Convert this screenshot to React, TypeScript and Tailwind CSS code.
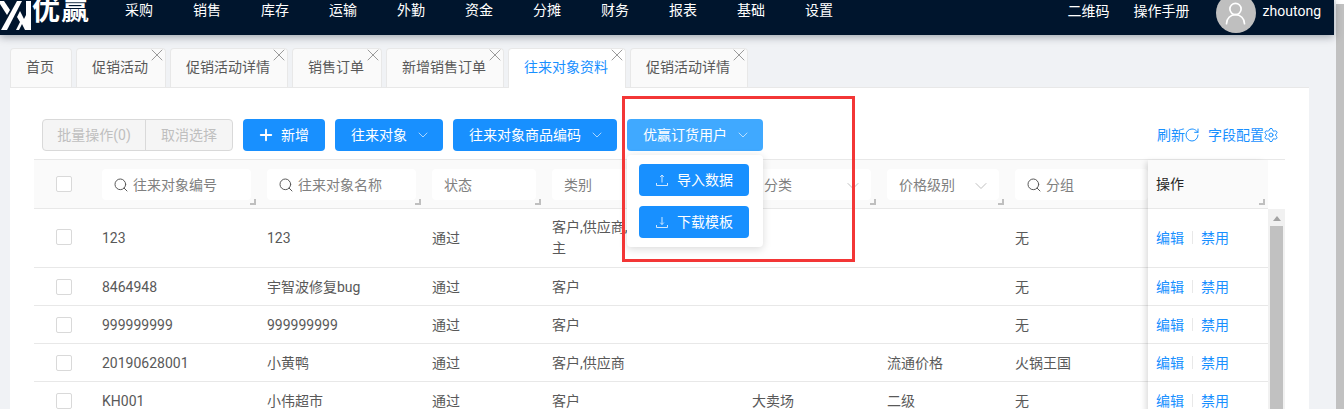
import { ChevronDown, Plus, RotateCw, Search, Settings, UserRound, X } from "lucide-react"

const navItems = ["采购", "销售", "库存", "运输", "外勤", "资金", "分摊", "财务", "报表", "基础", "设置"]

const tabs = [
  { label: "首页" },
  { label: "促销活动", close: true },
  { label: "促销活动详情", close: true },
  { label: "销售订单", close: true },
  { label: "新增销售订单", close: true },
  { label: "往来对象资料", close: true, active: true },
  { label: "促销活动详情", close: true },
]

const filters = [
  { label: "往来对象编号", width: "w-[165px]", search: true },
  { label: "往来对象名称", width: "w-[165px]", search: true },
  { label: "状态", width: "w-[120px]" },
  { label: "类别", width: "w-[200px]" },
  { label: "分类", width: "w-[135px]", chevron: true },
  { label: "价格级别", width: "w-[128px]", chevron: true },
  { label: "分组", width: "w-[133px]", search: true, open: true },
]

const rows = [
  { h: "h-[59px] pb-[2px]", cells: ["123", "123", "通过", "客户,供应商,加工商,物流商,货主", "", "", "无"] },
  { h: "h-[38px]", cells: ["8464948", "宇智波修复bug", "通过", "客户", "", "", "无"] },
  { h: "h-[38px]", cells: ["999999999", "999999999", "通过", "客户", "", "", "无"] },
  { h: "h-[38px]", cells: ["20190628001", "小黄鸭", "通过", "客户,供应商", "", "流通价格", "火锅王国"] },
  { h: "h-[38px]", cells: ["KH001", "小伟超市", "通过", "客户", "大卖场", "二级", "无"] },
]

const cellWidths = ["w-[165px]", "w-[165px]", "w-[120px]", "w-[200px]", "w-[135px]", "w-[128px]", "w-[133px]"]

function Checkbox() {
  return <span className="block h-4 w-4 rounded-[2px] border border-[#d9d9d9] bg-white" />
}

function ResizeHandle() {
  return <span className="absolute right-[-5px] bottom-[-5px] h-[6px] w-[6px] border-r-2 border-b-2 border-[#bfbfbf]" />
}

function TrayIcon({ down }: { down?: boolean }) {
  return (
    <svg width="14" height="14" viewBox="0 0 14 14" fill="none" stroke="currentColor" strokeWidth="1" className="shrink-0 opacity-80">
      <path d="M1.500 10v2.500h11V10" />
      {down ? <path d="M7 2v7.500M5.200 7.600 7 9.500l1.800-1.900" /> : <path d="M7 9.500V2M5.200 3.900 7 2l1.800 1.900" />}
    </svg>
  )
}

function BtnChevron() {
  return <ChevronDown size={16} strokeWidth={1.2} className="-mx-[2px] shrink-0 opacity-80" />
}

function Logo() {
  return (
    <div className="flex h-[35px] w-[125px] shrink-0 items-start overflow-hidden">
      <svg width="32" height="32" viewBox="0 0 32 32" fill="white" className="shrink-0">
        <path d="M-2 1h6l6 9-3 5z" />
        <path d="M1 30 17 1h5L7 30z" />
        <path d="M16 30l4-8-3-5 3-6 4 8 2-4V1h5v29h-6l-3-6-3 6z" />
      </svg>
      <span className="-mt-[5px] text-[28px] leading-[32px] font-bold tracking-[1px] text-white">优赢</span>
    </div>
  )
}

function Header() {
  return (
    <header className="relative z-10 flex h-[35px] w-[1334px] items-start overflow-hidden bg-[#00152d] text-sm text-white shadow-[0_2px_8px_rgba(0,21,41,0.35)]">
      <Logo />
      <nav className="flex gap-10 leading-[20px]">
        {navItems.map((item) => (
          <span key={item}>{item}</span>
        ))}
      </nav>
      <div className="ml-auto flex gap-6 leading-[22px]">
        <span>二维码</span>
        <span>操作手册</span>
      </div>
      <span className="mt-[-7px] ml-[26px] flex h-10 w-10 items-center justify-center rounded-full bg-[#bfbfbf]">
        <UserRound size={27} strokeWidth={1.5} />
      </span>
      <span className="ml-[7px] pr-[13px] leading-[22px]">zhoutong</span>
    </header>
  )
}

function Tabs() {
  return (
    <div className="mt-[13px] flex gap-1 pl-[10px]">
      {tabs.map((tab, i) => (
        <div
          key={i}
          className={
            tab.active
              ? "relative -mb-px h-10 rounded-t-[4px] border border-b-0 border-[#e8e8e8] bg-white pr-[17px] pl-[15px] text-sm leading-[37px] text-[#1890ff]"
              : "relative h-[39px] rounded-t-[4px] border border-b-0 border-[#e8e8e8] bg-[#fafafa] pr-[17px] pl-[15px] text-sm leading-[37px] text-[#595959]"
          }
        >
          {tab.label}
          {tab.close && <X size={20} strokeWidth={1.2} className="absolute top-[-4px] right-[-2px] text-[#9a9a9a]" />}
        </div>
      ))}
    </div>
  )
}

function Toolbar() {
  const base = "flex h-8 shrink-0 items-center whitespace-nowrap rounded-[4px] px-4 text-sm text-white"
  const btn = `${base} bg-[#1890ff]`
  return (
    <div className="flex items-center pl-2">
      <div className="flex h-8 w-[191px] rounded-[4px] border border-[#d9d9d9] bg-[#f5f5f5] text-sm leading-[30px] text-[#bfbfbf]">
        <span className="w-[103px] border-r border-[#d9d9d9] text-center">批量操作(0)</span>
        <span className="flex-1 text-center">取消选择</span>
      </div>
      <button className={`${btn} ml-[10px] w-[82px] gap-[6px] pl-[14px]`}>
        <Plus size={18} strokeWidth={2.5} className="shrink-0" />
        新增
      </button>
      <button className={`${btn} ml-[10px] w-[108px] gap-[10px]`}>
        往来对象
        <BtnChevron />
      </button>
      <button className={`${btn} ml-[10px] w-[164px] gap-[10px]`}>
        往来对象商品编码
        <BtnChevron />
      </button>
      <div className="relative ml-[10px]">
        <button className={`${base} w-[136px] gap-[10px] bg-[#40a9ff]`}>
          优赢订货用户
          <BtnChevron />
        </button>
        <div className="absolute top-9 left-0 z-20 flex h-[92px] w-[136px] flex-col gap-[10px] rounded-[4px] bg-white px-3 pt-[9px] shadow-[0_2px_8px_rgba(0,0,0,0.15)]">
          <button className={`${btn} w-[110px] gap-2 pl-4`}>
            <TrayIcon />
            导入数据
          </button>
          <button className={`${btn} w-[110px] gap-2 pl-4`}>
            <TrayIcon down />
            下载模板
          </button>
        </div>
      </div>
      <div className="ml-auto flex items-center gap-[9px] pr-[7px] text-sm text-[#1890ff]">
        <span className="flex items-center">
          刷新
          <RotateCw size={16} strokeWidth={1.5} className="-mx-px" />
        </span>
        <span className="flex items-center">
          字段配置
          <Settings size={16} strokeWidth={1.5} className="-mx-px" />
        </span>
      </div>
    </div>
  )
}

function Table() {
  return (
    <div className="mt-2 flex border-t border-[#e8e8e8] text-sm leading-[21px] text-[#595959]">
      <div className="w-[1114px] shrink-0 overflow-hidden">
        <div className="flex h-[49px] border-b border-[#e8e8e8] bg-[#fafafa]">
          <div className="w-[68px] shrink-0 pt-4 pl-[22px]">
            <Checkbox />
          </div>
          {filters.map((f) => (
            <div key={f.label} className={`${f.width} shrink-0 pt-[9px] ${f.open ? "" : "pr-4"}`}>
              <div className="relative flex h-[31px] items-center rounded-[4px] bg-white pt-[2px] pl-3 text-[#808080]">
                {f.search && <Search size={16} strokeWidth={1.5} className="mr-1 -ml-px shrink-0 -translate-y-px text-[#595959]" />}
                {f.label}
                {f.chevron && <ChevronDown size={20} strokeWidth={1.2} className="absolute right-2 text-[#bfbfbf]" />}
                {!f.open && <ResizeHandle />}
              </div>
            </div>
          ))}
        </div>
        {rows.map((row, i) => (
          <div key={i} className={`${row.h} flex items-center border-b border-[#e8e8e8]`}>
            <div className="w-[68px] shrink-0 pl-[22px]">
              <Checkbox />
            </div>
            {row.cells.map((cell, j) => (
              <div key={j} className={`${cellWidths[j]} shrink-0 pt-[2px] pr-4`}>
                {cell}
              </div>
            ))}
          </div>
        ))}
      </div>
      <div className="z-10 w-[120px] shrink-0 bg-white shadow-[-4px_0_6px_-2px_rgba(0,0,0,0.15)]">
        <div className="relative flex h-[49px] items-center border-b border-[#e8e8e8] bg-[#fafafa] pl-2 text-[#262626]">
          操作
          <span className="absolute right-[3px] bottom-[3px] h-[6px] w-[6px] border-r-2 border-b-2 border-[#bfbfbf]" />
        </div>
        {rows.map((row, i) => (
          <div key={i} className={`${row.h} flex items-center border-b border-[#e8e8e8] pl-2 text-[#1890ff]`}>
            <span className="pt-[2px]">编辑</span>
            <span className="mx-2 h-[13px] w-px bg-[#e8e8e8]" />
            <span className="pt-[2px]">禁用</span>
          </div>
        ))}
      </div>
      <div className="w-[17px] shrink-0">
        <div className="h-[49px]" />
        <div className="flex h-[400px] flex-col items-center bg-[#f1f1f1]">
          <span className="mt-[7px] h-0 w-0 border-x-[4px] border-b-[5px] border-x-transparent border-b-[#a3a3a3]" />
          <span className="mt-[5px] h-full w-[13px] bg-[#c1c1c1]" />
        </div>
      </div>
    </div>
  )
}

export default function App() {
  return (
    <div className="relative flex h-[409px] w-[1344px] overflow-hidden bg-[#f0f2f5] font-['Roboto','Noto_Sans_CJK_SC',sans-serif]">
      <div className="w-[1336px] shrink-0">
        <Header />
        <Tabs />
        <div className="ml-[10px] h-[400px] w-[1299px] border-t border-[#e8e8e8] bg-white px-6 pt-[31px]">
          <Toolbar />
          <Table />
        </div>
      </div>
      <div className="w-2 border-t-4 border-white bg-[#c1c1c1]" />
      {/* annotation box from the screenshot */}
      <div className="pointer-events-none absolute top-[96px] left-[622px] z-30 h-[166px] w-[233px] border-[3px] border-[#f33636]" />
    </div>
  )
}
